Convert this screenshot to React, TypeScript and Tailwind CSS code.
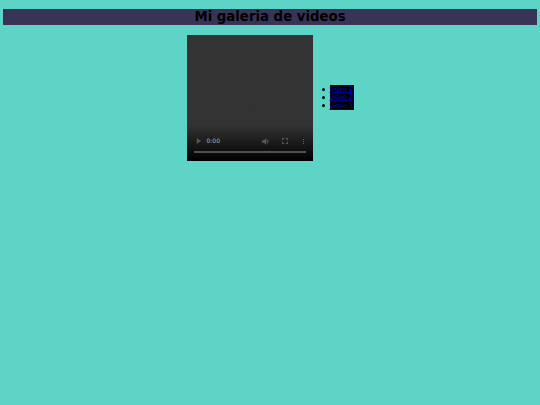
const VIDEOS = ["video 1", "video 2", "video 3"];

function VideoPlayer() {
  return (
    <div className="relative h-[126px] w-[126px] bg-[#333333]">
      <div className="absolute top-[73px] left-[62px] h-px w-px bg-[#222222]" />
      {/* Chrome's control strip, fading the frame to black. */}
      <div className="absolute inset-x-0 bottom-0 flex h-[36px] flex-col justify-end bg-gradient-to-b from-transparent to-black px-[7px] pb-[8px]">
        <div className="flex h-[8px] items-center text-[#555555]">
          <svg viewBox="0 0 8 8" className="ml-[2px] h-[6px] w-[6px]" fill="currentColor" aria-hidden>
            <path d="M1 0l6 4-6 4z" />
          </svg>
          <span className="ml-[5px] text-[6px] leading-[8px] text-[#b0b0b0]">0:00</span>
          <svg viewBox="0 0 8 8" className="ml-auto h-[7px] w-[7px]" fill="currentColor" aria-hidden>
            <path d="M0 2.5h2L5 0v8L2 5.5H0z" />
            <path d="M6 1.5c2 1 2 4 0 5z" />
          </svg>
          <svg viewBox="0 0 8 8" className="ml-[13px] h-[6px] w-[6px]" fill="none" stroke="currentColor" strokeWidth="1.5" aria-hidden>
            <path d="M0.7 3V0.7H3M5 0.7h2.3V3M7.3 5v2.3H5M3 7.3H0.7V5" />
          </svg>
          <div className="mr-[2px] ml-[15px] flex flex-col gap-[1px]">
            <span className="h-px w-px bg-[#666666]" />
            <span className="h-px w-px bg-[#666666]" />
            <span className="h-px w-px bg-[#666666]" />
          </div>
        </div>
        <div className="mt-[6px] h-[2px] bg-[#505050]" />
      </div>
    </div>
  );
}

export default function App() {
  return (
    <div className="min-h-[405px] bg-[#5ed4c7] px-[3px] pt-[9px] font-['DejaVu_Sans',sans-serif] text-black">
      <h1 className="h-4 bg-[#373557] text-center text-[13.3px] leading-4 font-bold">Mi galeria de videos</h1>

      <div className="mt-[10px] flex items-center justify-center">
        <VideoPlayer />
        <ul className="ml-[8.5px] pb-px text-[6.4px] leading-[8.4px]">
          {VIDEOS.map((v) => (
            <li key={v} className="flex items-center">
              <span className="mr-[4.5px] ml-px h-[3px] w-[3px] rounded-full bg-black" />
              <a href="#" className="block w-[24px] bg-black text-[#0000e0] underline decoration-[#000090]">
                {v}
              </a>
            </li>
          ))}
        </ul>
      </div>
    </div>
  );
}
